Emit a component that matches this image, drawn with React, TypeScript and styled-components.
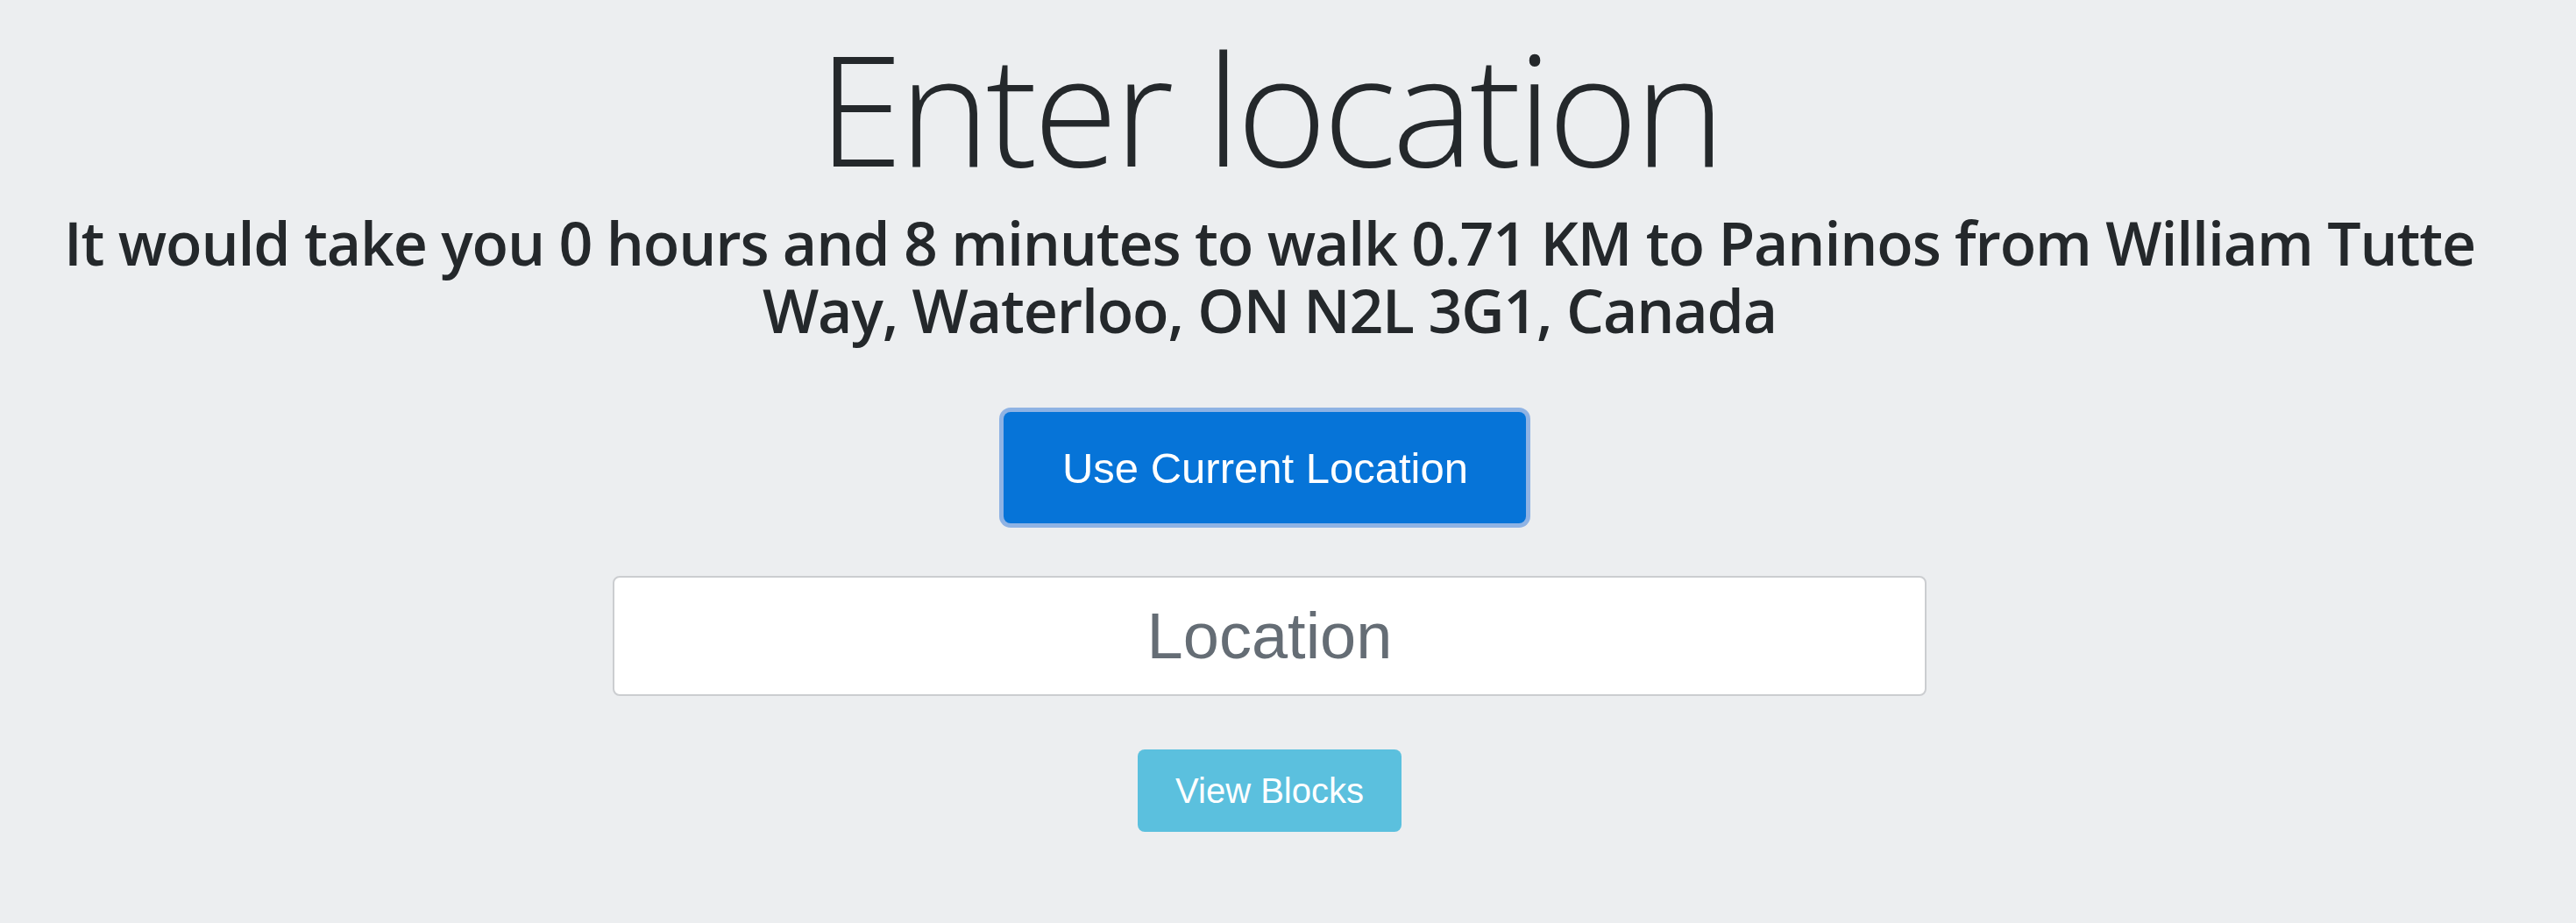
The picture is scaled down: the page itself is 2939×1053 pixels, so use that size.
import React from "react";
import styled, { createGlobalStyle, css } from "styled-components";

const GlobalStyle = createGlobalStyle`
    html, body {
        margin: 0;
        padding: 0;
        background: #eceef0;
    }
    body {
        font-family: "Open Sans", "Noto Sans", sans-serif;
        color: #24282b;
    }
    * {
        box-sizing: border-box;
    }
`;

const Page = styled.main`
    display: flex;
    flex-direction: column;
    align-items: center;
    min-height: 1053px;
    padding: 17px 42px 0 0;
    text-align: center;
`;

const Title = styled.h1`
    margin: 0;
    font-family: "Open Sans", sans-serif;
    font-weight: 300;
    font-size: 176px;
    line-height: 211px;
    letter-spacing: -4.7px;
    color: #24282b;
`;

const Message = styled.h3`
    margin: 10px 0 0;
    max-width: 2870px;
    font-family: "Open Sans", sans-serif;
    font-weight: 600;
    font-size: 68px;
    line-height: 77px;
    letter-spacing: -1.15px;
    color: #24282b;
`;

const Button = styled.button<{ $variant: "primary" | "info" }>`
    display: inline-flex;
    align-items: center;
    justify-content: center;
    border: none;
    color: #fff;
    font-family: "Liberation Sans", Arial, sans-serif;
    font-weight: 400;
    cursor: pointer;
    border-radius: 8px;

    ${({ $variant }) =>
        $variant === "primary"
            ? css`
                  margin: 78px 11px 0 0;
                  height: 127px;
                  padding: 0 66px 0 67px;
                  font-size: 49px;
                  background: #0674d8;
                  box-shadow: 0 0 0 5px #8fb3e4;
              `
            : css`
                  margin-top: 61px;
                  height: 94px;
                  padding: 0 43px;
                  font-size: 40px;
                  background: #5bc0de;
              `}
`;

const LocationInput = styled.input`
    margin-top: 60px;
    width: 1499px;
    height: 137px;
    border: 2px solid #cbcdd0;
    border-radius: 8px;
    background: #fff;
    text-align: center;
    font-family: "Liberation Sans", Arial, sans-serif;
    font-size: 74px;
    color: #495057;
    outline: none;

    &::placeholder {
        color: #656d75;
    }
`;

export default function App() {
    return (
        <>
            <GlobalStyle />
            <Page>
                <Title>Enter location</Title>
                <Message>
                    It would take you 0 hours and 8 minutes to walk 0.71 KM to Paninos from William Tutte Way, Waterloo, ON N2L 3G1, Canada
                </Message>
                <Button $variant="primary">Use Current Location</Button>
                <LocationInput type="text" placeholder="Location" />
                <Button $variant="info">View Blocks</Button>
            </Page>
        </>
    );
}
